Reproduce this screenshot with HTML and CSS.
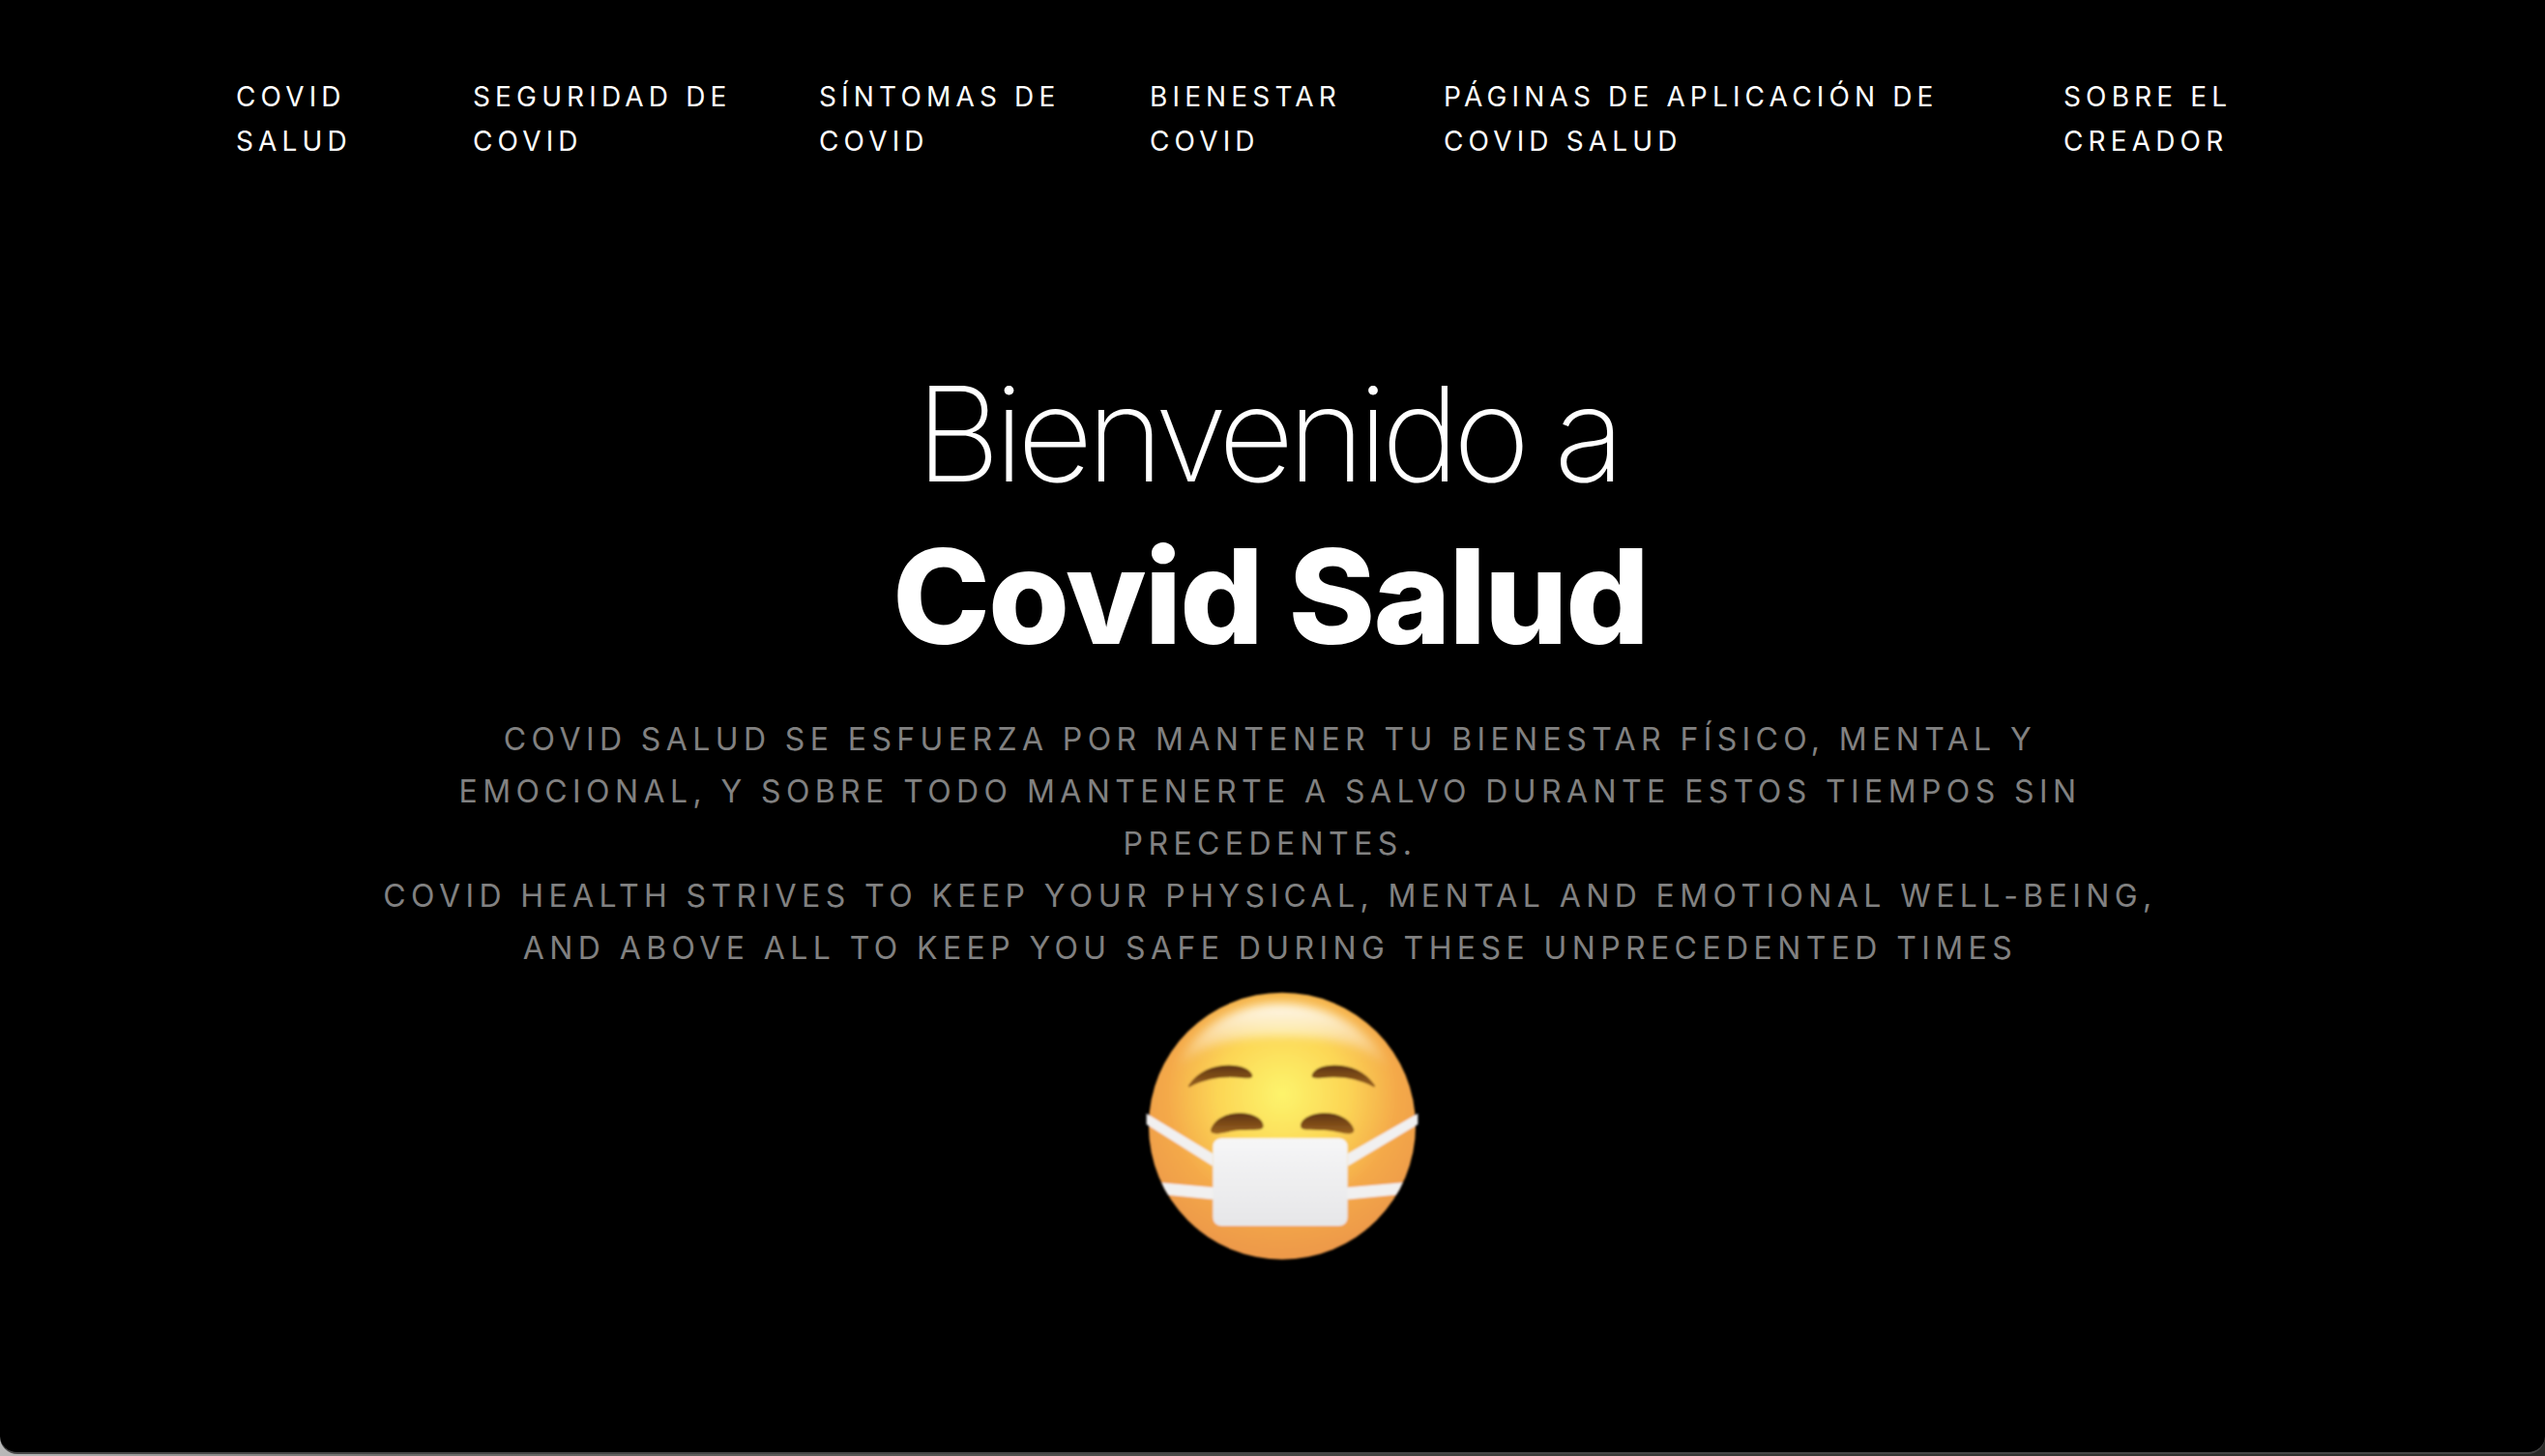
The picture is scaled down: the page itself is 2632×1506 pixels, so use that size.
FILE: index.html
```html
<!DOCTYPE html>
<html lang="es">
    <head>
        <meta charset="UTF-8">
        <meta name="viewport" content="width=device-width, initial-scale=1.0">
        <title>Covid Salud</title>
        <link rel="stylesheet" href="styles.css">
    </head>
    <body>
        <div class="window">
            <nav class="nav">
                <a href="#">COVID<br>SALUD</a>
                <a href="#">SEGURIDAD DE<br>COVID</a>
                <a href="#">SÍNTOMAS DE<br>COVID</a>
                <a href="#">BIENESTAR<br>COVID</a>
                <a href="#">PÁGINAS DE APLICACIÓN DE<br>COVID SALUD</a>
                <a href="#">SOBRE EL<br>CREADOR</a>
            </nav>
            <main class="hero">
                <h1><span class="light">Bienvenido a</span><strong>Covid Salud</strong></h1>
                <p>COVID SALUD SE ESFUERZA POR MANTENER TU BIENESTAR FÍSICO, MENTAL Y<br>
                EMOCIONAL, Y SOBRE TODO MANTENERTE A SALVO DURANTE ESTOS TIEMPOS SIN<br>
                PRECEDENTES.<br>
                COVID HEALTH STRIVES TO KEEP YOUR PHYSICAL, MENTAL AND EMOTIONAL WELL-BEING,<br>
                AND ABOVE ALL TO KEEP YOU SAFE DURING THESE UNPRECEDENTED TIMES</p>
                <svg class="emoji" viewBox="0 0 1020 960" width="340" height="320" role="img" aria-label="Cara con mascarilla">
                    <defs>
                        <radialGradient id="face" cx="50%" cy="38%" r="60%">
                            <stop offset="0" stop-color="#fdf46c"/>
                            <stop offset="0.4" stop-color="#fcd655"/>
                            <stop offset="0.72" stop-color="#f4a94a"/>
                            <stop offset="1" stop-color="#ee9a48"/>
                        </radialGradient>
                        <linearGradient id="shine" x1="0" y1="0" x2="0" y2="1">
                            <stop offset="0" stop-color="#fff" stop-opacity="0.9"/>
                            <stop offset="1" stop-color="#fff" stop-opacity="0"/>
                        </linearGradient>
                        <linearGradient id="mask" x1="0" y1="0" x2="0" y2="1">
                            <stop offset="0" stop-color="#f6f6f7"/>
                            <stop offset="1" stop-color="#e6e6e8"/>
                        </linearGradient>
                        <linearGradient id="brow" x1="0" y1="0" x2="0" y2="1">
                            <stop offset="0" stop-color="#5e3410"/>
                            <stop offset="1" stop-color="#9a6220"/>
                        </linearGradient>
                        <filter id="soft"><feGaussianBlur stdDeviation="3.5"/></filter>
                        <filter id="softer"><feGaussianBlur stdDeviation="14"/></filter>
                        <clipPath id="round"><circle cx="525" cy="497" r="414"/></clipPath>
                    </defs>
                    <g filter="url(#soft)">
                        <circle cx="525" cy="497" r="414" fill="url(#face)"/>
                        <path d="M195 320C260 180 390 118 520 118C650 118 790 180 860 320C780 235 650 220 520 220C390 220 270 240 195 320Z" fill="url(#shine)" filter="url(#softer)"/>
                        <path d="M235 370C262 328 310 308 360 308C395 308 428 320 433 340C434 350 420 350 400 348C345 342 290 350 240 375C234 378 232 375 235 370Z" fill="url(#brow)"/>
                        <path d="M812 370C785 328 737 308 687 308C652 308 622 320 617 340C616 350 630 350 650 348C705 342 757 350 807 375C813 378 815 375 812 370Z" fill="url(#brow)"/>
                        <path d="M303 508C315 475 350 457 392 457C435 457 467 475 467 497C467 512 440 508 395 510C350 512 303 535 303 508Z" fill="url(#brow)"/>
                        <path d="M748 508C736 475 700 457 658 457C615 457 582 475 582 497C582 512 610 508 655 510C700 512 748 535 748 508Z" fill="url(#brow)"/>
                        <g clip-path="url(#round)" fill="#f1f0f0">
                            <path d="M140 672L315 688V725L140 708Z"/>
                            <path d="M905 672L725 688V725L905 708Z"/>
                        </g>
                        <path d="M104 458L310 583V622L104 492ZM946 458L728 583V622L946 492Z" fill="#f1f0f0"/>
                        <rect x="310" y="535" width="418" height="272" rx="26" fill="url(#mask)"/>
                    </g>
                </svg>
            </main>
        </div>
    </body>
</html>
```

FILE: styles.css
```css
* {
    box-sizing: border-box;
}
html, body {
    height: 100%;
}
body {
    margin: 0;
    overflow: hidden;
    font-family: Inter, "Liberation Sans", sans-serif;
    background: linear-gradient(90deg, #b8b8b8 0%, #6a6a68 15%, #3c3c3a 60%, #2a2a28 100%);
}
.window {
    height: 1504px;
    background-color: #000;
    border-bottom: 2px solid #464646;
    border-radius: 0 0 18px 18px;
    overflow: hidden;
}
.nav {
    display: grid;
    grid-template-columns: 245px 358px 342px 304px 641px 1fr;
    padding: 77px 0 0 244px;
    font-size: 28px;
    line-height: 46px;
    letter-spacing: 5.15px;
}
.nav a {
    color: #fff;
    text-decoration: none;
}
.hero {
    display: flex;
    flex-direction: column;
    align-items: center;
    padding: 196px 5px 0 0;
    text-align: center;
}
h1 {
    margin: 0;
    font-size: 136px;
    line-height: 168px;
    color: #fff;
}
h1 span, h1 strong {
    display: block;
}
.light {
    font-weight: 250;
    letter-spacing: -6.6px;
    padding-right: 6px;
}
h1 strong {
    font-weight: 800;
    letter-spacing: -2px;
}
.hero p {
    margin: 37px 0 0;
    font-size: 32px;
    line-height: 54px;
    letter-spacing: 5.4px;
    color: #818181;
}
.emoji {
    display: block;
    margin: -9px 0 0 14px;
}
```
